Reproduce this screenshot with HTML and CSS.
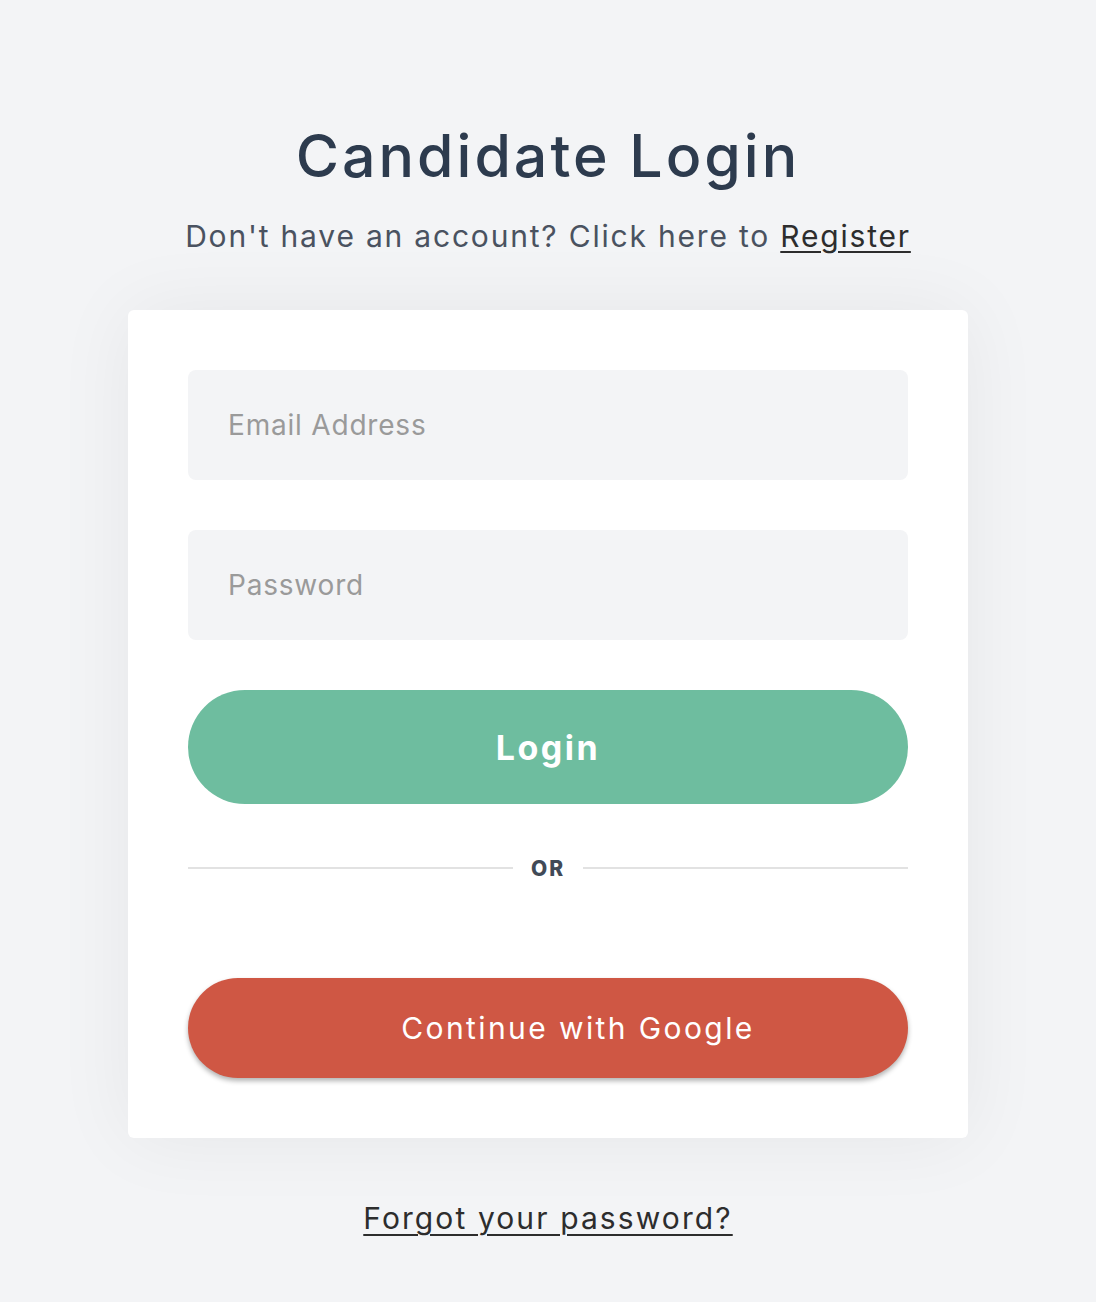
FILE: index.html
```html
<!DOCTYPE html>
<html lang="en">
<head>
<meta charset="utf-8">
<title>Candidate Login</title>
<link rel="stylesheet" href="styles.css">
</head>
<body>
<main class="page">
  <h1 class="title">Candidate Login</h1>
  <p class="subtitle">Don't have an account? Click here to <a class="link" href="#">Register</a></p>
  <section class="card">
    <form class="form">
      <input class="field" type="email" placeholder="Email Address">
      <input class="field" type="password" placeholder="Password">
      <button class="btn btn-login" type="button">Login</button>
      <div class="divider"><span class="divider-text">OR</span></div>
      <button class="btn btn-google" type="button">Continue with Google</button>
    </form>
  </section>
  <a class="forgot" href="#">Forgot your password?</a>
</main>
</body>
</html>
```
FILE: styles.css
```css
* { box-sizing: border-box; }
html, body { margin: 0; padding: 0; }
body {
  background: #f3f4f6;
  font-family: "Inter", "Open Sans", sans-serif;
  color: #2d3748;
}
.page {
  display: flex;
  flex-direction: column;
  align-items: center;
  padding-top: 120px;
}
.title {
  margin: 0;
  font-size: 59px;
  font-weight: 500;
  line-height: 72px;
  color: #2d3b4e;
  letter-spacing: 3px;
}
.subtitle {
  margin: 26px 0 0;
  font-size: 30px;
  line-height: 36px;
  color: #4a5260;
  letter-spacing: 1.8px;
}
.link { color: #2d2d2d; text-decoration: underline; text-underline-offset: 4px; text-decoration-thickness: 2px; }
.card {
  margin-top: 56px;
  width: 840px;
  background: #fff;
  border-radius: 6px;
  padding: 60px;
  box-shadow: 0 0 80px rgba(0, 0, 0, 0.06);
}
.form { display: flex; flex-direction: column; }
.field {
  height: 110px;
  border: none;
  border-radius: 8px;
  background: #f3f4f6;
  padding: 0 40px;
  font-family: inherit;
  font-size: 28px;
  color: #333;
  margin-bottom: 50px;
  outline: none;
  letter-spacing: 0.8px;
}
.field::placeholder { color: #9a9a9a; }
.btn {
  border: none;
  border-radius: 999px;
  font-family: inherit;
  color: #fff;
  cursor: pointer;
}
.btn-login {
  height: 114px;
  background: #6ebd9f;
  font-size: 34px;
  font-weight: 700;
  letter-spacing: 2.5px;
}
.divider {
  display: flex;
  align-items: center;
  gap: 18px;
  margin: 50px 0 96px;
  height: 28px;
}
.divider::before, .divider::after {
  content: "";
  flex: 1;
  height: 2px;
  background: #e2e2e2;
}
.divider-text {
  font-size: 21px;
  font-weight: 800;
  color: #414a57;
  letter-spacing: 2px;
}
.btn-google {
  height: 100px;
  background: #cf5744;
  font-size: 30px;
  font-weight: 400;
  padding-left: 66px;
  letter-spacing: 2.4px;
  box-shadow: 0 3px 5px rgba(0, 0, 0, 0.3);
}
.forgot {
  margin-top: 62px;
  font-size: 30px;
  line-height: 36px;
  color: #2d2d2d;
  letter-spacing: 2.1px;
  text-decoration: underline;
  text-underline-offset: 5px;
  text-decoration-thickness: 2px;
}
```
